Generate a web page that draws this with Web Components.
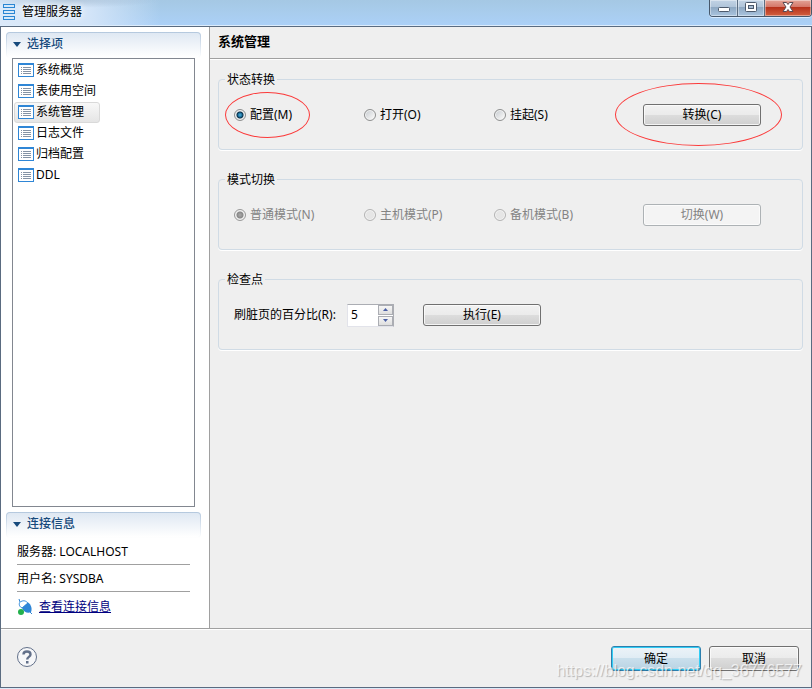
<!DOCTYPE html>
<html lang="zh-CN">
<head>
<meta charset="utf-8">
<title>管理服务器</title>
<style>
	html, body {
		margin: 0;
		height: 100%;
	}
	body {
		font: 12px/18px "Noto Sans", "Noto Sans CJK SC", sans-serif;
		color: #000;
	}
</style>
</head>
<body>
<app-window caption="管理服务器">
	<side-bar slot="side">
		<side-section caption="选择项" grow>
			<nav-list>
				<nav-item>系统概览</nav-item>
				<nav-item>表使用空间</nav-item>
				<nav-item selected>系统管理</nav-item>
				<nav-item>日志文件</nav-item>
				<nav-item>归档配置</nav-item>
				<nav-item>DDL</nav-item>
			</nav-list>
		</side-section>
		<side-section caption="连接信息">
			<conn-info server="LOCALHOST" user="SYSDBA"></conn-info>
		</side-section>
	</side-bar>
	<main-panel caption="系统管理">
		<group-box caption="状态转换">
			<radio-set name="state" options="配置(M),打开(O),挂起(S)" marked></radio-set>
			<push-button marked>转换(C)</push-button>
		</group-box>
		<group-box caption="模式切换">
			<radio-set name="mode" options="普通模式(N),主机模式(P),备机模式(B)" disabled></radio-set>
			<push-button disabled>切换(W)</push-button>
		</group-box>
		<group-box caption="检查点">
			<spin-box caption="刷脏页的百分比(R):" value="5"></spin-box>
			<push-button>执行(E)</push-button>
		</group-box>
	</main-panel>
	<bottom-bar slot="bottom">
		<push-button size="large" primary>确定</push-button>
		<push-button size="large">取消</push-button>
	</bottom-bar>
</app-window>

<script>
// window frame
window.customElements.define('app-window', class extends HTMLElement {
	constructor() {
		super();
		let shadowRoot = this.attachShadow({mode: 'open'});
		shadowRoot.innerHTML = `
<style>
	:host {
		display: flex;
		flex-direction: column;
		box-sizing: border-box;
		min-height: 100vh;
		padding-bottom: 1px;
		background: #dce9f8;
	}
	header {
		display: flex;
		justify-content: space-between;
		align-items: flex-start;
		height: 26px;
		box-sizing: border-box;
		border-bottom: 1px solid #dcecfc;
		background:
			radial-gradient(ellipse 90px 8px at 70px 0, #8fa9c080 0%, transparent 100%),
			linear-gradient(90deg, #dbe9f9 0, #d2e4f8 90px, transparent 160px),
			linear-gradient(180deg, #a5c8e4 0, #a8ccec 45%, #abd0f7 100%);
	}
	.title {
		display: flex;
		align-items: center;
		gap: 7px;
		height: 24px;
		padding-left: 3px;
	}
	.title span {
		text-shadow: 0 0 6px #fff, 0 0 10px #fff;
	}
	h1 {
		margin: 0;
		font: inherit;
	}
	svg {
		display: block;
	}
	.frame {
		flex: 1;
		display: flex;
		flex-direction: column;
		border: 1px solid #5a6b80;
		background: #efefef;
	}
	.body {
		flex: 1;
		display: flex;
	}
</style>
<header>
	<div class="title">
		<svg width="12" height="16" fill="#d5e8fa" stroke="#2a86d3">
			<rect x=".5" y=".5" width="11" height="3"/>
			<rect x=".5" y="6.5" width="11" height="3"/>
			<rect x=".5" y="12.5" width="11" height="3"/>
		</svg>
		<h1><span>${this.getAttribute('caption')}</span></h1>
	</div>
	<window-controls></window-controls>
</header>
<div class="frame">
	<div class="body">
		<slot name="side"></slot>
		<slot></slot>
	</div>
	<slot name="bottom"></slot>
</div>
    `;
	}
});
// minimize, maximize, close
window.customElements.define('window-controls', class extends HTMLElement {
	constructor() {
		super();
		let shadowRoot = this.attachShadow({mode: 'open'});
		shadowRoot.innerHTML = `
<style>
	:host {
		display: flex;
		height: 17px;
		box-sizing: border-box;
		border: 1px solid #47586b;
		border-top: 0;
		border-radius: 0 0 4px 4px;
		overflow: hidden;
		box-shadow: 0 1px 0 #d8ebff;
	}
	button {
		display: flex;
		justify-content: center;
		width: 28px;
		margin: 0;
		padding: 0;
		border: 0;
		border-right: 1px solid #5b6d82;
		background: linear-gradient(#c2d3e5 0, #b1c5da 42%, #8da7c1 43%, #a9c4df 100%);
		box-shadow: inset 0 0 0 1px #ffffff66;
	}
	button + button {
		width: 27px;
	}
	button:last-child {
		width: 46px;
		border-right: 0;
		background: linear-gradient(#e3a497 0, #d5786a 42%, #b52f19 43%, #d2603f 100%);
	}
</style>
<button aria-label="最小化">
	<svg width="14" height="16"><rect x="1.5" y="7.5" width="11" height="4" rx="1" fill="#fff" stroke="#4d5a6c"/></svg>
</button>
<button aria-label="最大化">
	<svg width="14" height="16">
		<rect x="1.5" y="2.5" width="11" height="9" rx="1" fill="#fff" stroke="#4d5a6c"/>
		<rect x="4.5" y="5.5" width="5" height="3" fill="#a9bdd3" stroke="#4d5a6c"/>
	</svg>
</button>
<button aria-label="关闭">
	<svg width="14" height="16">
		<path d="M2 2.500h3.500L7 4.500l1.500-2H12L9 7l3 4.500H8.500L7 9.500l-1.500 2H2L5 7z" fill="#fff" stroke="#5c4a52"/>
	</svg>
</button>
    `;
	}
});
// left column
window.customElements.define('side-bar', class extends HTMLElement {
	constructor() {
		super();
		let shadowRoot = this.attachShadow({mode: 'open'});
		shadowRoot.innerHTML = `
<style>
	:host {
		display: flex;
		flex-direction: column;
		gap: 5px;
		flex: 0 0 209px;
		box-sizing: border-box;
		padding: 5px 8px 0 5px;
		border-right: 1px solid #a0a0a0;
		background: #fff;
	}
</style>
<slot></slot>
    `;
	}
});
// collapsible section of the left column
window.customElements.define('side-section', class extends HTMLElement {
	constructor() {
		super();
		let shadowRoot = this.attachShadow({mode: 'open'});
		shadowRoot.innerHTML = `
<style>
	:host {
		display: flex;
		flex-direction: column;
	}
	:host([grow]) {
		flex: 1;
	}
	h2 {
		margin: 0;
		font: inherit;
	}
	button {
		display: flex;
		align-items: center;
		gap: 6px;
		width: 100%;
		height: 26px;
		margin: 0;
		padding: 0 6px 2px;
		border: 1px solid transparent;
		border-radius: 4px;
		background:
			linear-gradient(#dfe8f3, #fff) padding-box,
			linear-gradient(#b4c8de, #fff) border-box;
		font: inherit;
		font-weight: 500;
		color: #174a7c;
	}
</style>
<h2>
	<button aria-expanded="true">
		<svg width="8" height="5"><path d="M0 0h8L4 5z" fill="#174a7c"/></svg>
		${this.getAttribute('caption')}
	</button>
</h2>
<slot></slot>
    `;
	}
});
// list of pages
window.customElements.define('nav-list', class extends HTMLElement {
	constructor() {
		super();
		let shadowRoot = this.attachShadow({mode: 'open'});
		shadowRoot.innerHTML = `
<style>
	:host {
		flex: 1;
		display: flex;
		flex-direction: column;
		align-items: flex-start;
		margin: 0 6px;
		padding: 1px;
		border: 1px solid #828790;
		background: #fff;
	}
</style>
<slot></slot>
    `;
		this.setAttribute('role', 'listbox');
	}
});
window.customElements.define('nav-item', class extends HTMLElement {
	constructor() {
		super();
		let shadowRoot = this.attachShadow({mode: 'open'});
		shadowRoot.innerHTML = `
<style>
	:host {
		display: flex;
		align-items: center;
		gap: 2px;
		box-sizing: border-box;
		height: 21px;
		padding: 0 15px 1px 3px;
		border: 1px solid transparent;
		border-radius: 3px;
	}
	:host([selected]) {
		border-color: #d9d9d9;
		background: linear-gradient(#f8f8f8, #e5e5e5);
	}
</style>
<svg width="16" height="14" fill="none">
	<rect x=".5" y=".5" width="15" height="13" fill="#fff" stroke="#2f86d6"/>
	<path d="M0 1h16" stroke="#2f86d6" stroke-width="2"/>
	<path d="M3 4.500h1M3 6.500h1M3 8.500h1M3 10.500h1M5 4.500h8M5 6.500h8M5 8.500h8M5 10.500h8" stroke="#8593a5"/>
</svg>
<slot></slot>
    `;
		this.setAttribute('role', 'option');
	}
});
// connection details
window.customElements.define('conn-info', class extends HTMLElement {
	constructor() {
		super();
		let shadowRoot = this.attachShadow({mode: 'open'});
		shadowRoot.innerHTML = `
<style>
	:host {
		display: block;
		padding: 0 11px 12px;
	}
	.row {
		box-sizing: border-box;
		height: 27px;
		padding-top: 5px;
		border-bottom: 1px solid #a0a0a0;
	}
	.link {
		display: flex;
		align-items: center;
		gap: 6px;
		padding-top: 6px;
	}
	a {
		color: #000080;
	}
</style>
<div class="row">服务器: ${this.getAttribute('server')}</div>
<div class="row">用户名: ${this.getAttribute('user')}</div>
<div class="link">
	<svg width="16" height="16" fill="none">
		<path d="M2 0l1 3M15 15l-2-2" stroke="#2f86d6"/>
		<path d="M5 9C1 7 2 3 4 2.500 7 1 9 2 11 4z" fill="#fff" stroke="#3a8edb"/>
		<path d="M5 9l6-5.500c3 2 4.500 6 3 9.500-3 2-7.500 0-9-4z" fill="#2f86d6"/>
		<circle cx="4" cy="13" r="3" fill="#22b04b"/>
	</svg>
	<a href="#">查看连接信息</a>
</div>
    `;
	}
});
// right side
window.customElements.define('main-panel', class extends HTMLElement {
	constructor() {
		super();
		let shadowRoot = this.attachShadow({mode: 'open'});
		shadowRoot.innerHTML = `
<style>
	:host {
		flex: 1;
		min-width: 0;
	}
	h2 {
		box-sizing: border-box;
		height: 32px;
		margin: 0;
		padding: 5px 8px;
		border-bottom: 1px solid #a0a0a0;
		box-shadow: 0 1px 0 #fff;
		font-size: 13px;
		line-height: 18px;
	}
	.groups {
		display: flex;
		flex-direction: column;
		gap: 20px;
		padding: 12px 8px;
	}
</style>
<h2>${this.getAttribute('caption')}</h2>
<div class="groups"><slot></slot></div>
    `;
	}
});
// titled frame
window.customElements.define('group-box', class extends HTMLElement {
	constructor() {
		super();
		let shadowRoot = this.attachShadow({mode: 'open'});
		shadowRoot.innerHTML = `
<style>
	:host {
		display: block;
		height: 80px;
	}
	fieldset {
		box-sizing: border-box;
		height: 79px;
		margin: 0;
		padding: 15px 14px 0 15px;
		border: 1px solid #d0dbe5;
		border-radius: 4px;
		box-shadow: 0 1px 0 #fff;
		min-width: 0;
	}
	legend {
		height: 17px;
		margin-left: -9px;
		padding: 0 2px;
	}
	.row {
		display: flex;
		align-items: center;
		height: 24px;
	}
</style>
<fieldset>
	<legend>${this.getAttribute('caption')}</legend>
	<div class="row"><slot></slot></div>
</fieldset>
    `;
	}
});
// row of radio buttons, the first one is checked
window.customElements.define('radio-set', class extends HTMLElement {
	constructor() {
		super();
		let shadowRoot = this.attachShadow({mode: 'open'});
		let disabled = this.hasAttribute('disabled') ? 'disabled' : '';
		let name = this.getAttribute('name');
		let items = this.getAttribute('options').split(',').map((text, i) => `
<label>
	<input type="radio" name="${name}" ${i === 0 ? 'checked' : ''} ${disabled}>
	${text}
</label>`).join('');
		shadowRoot.innerHTML = `
<style>
	:host {
		display: flex;
		margin-right: 19px;
	}
	label {
		display: flex;
		align-items: center;
		gap: 4px;
		position: relative;
		width: 130px;
	}
	input {
		appearance: none;
		box-sizing: border-box;
		width: 12px;
		height: 12px;
		margin: 0;
		border: 1px solid #8e8f8f;
		border-radius: 50%;
		background: linear-gradient(135deg, #c4c9ce, #f4f4f4 80%);
		box-shadow: inset 0 0 0 1px #f4f4f4;
	}
	input:checked {
		background: radial-gradient(circle, #4fb4dc 0, #1b6d9b 2px, #0b3047 3px, #d8dde1 4px);
	}
	:host([disabled]) {
		color: #838383;
	}
	:host([disabled]) input {
		border-color: #b4b4b4;
		background: #e6e6e6;
	}
	:host([disabled]) input:checked {
		border-color: #999;
		background: radial-gradient(circle, #aaa 0, #888 3px, #e6e6e6 4px);
	}
	:host([marked]) label:first-of-type::after {
		content: "";
		position: absolute;
		left: -9px;
		top: -14px;
		width: 83px;
		height: 44px;
		border: 1px solid #fb3a3a;
		border-radius: 50%;
		pointer-events: none;
	}
</style>
${items}
    `;
	}
});
// number field with arrows
window.customElements.define('spin-box', class extends HTMLElement {
	constructor() {
		super();
		let shadowRoot = this.attachShadow({mode: 'open'});
		shadowRoot.innerHTML = `
<style>
	:host {
		display: flex;
		align-items: center;
		margin-right: 29px;
	}
	label {
		width: 113px;
		white-space: nowrap;
	}
	.field {
		display: flex;
		box-sizing: border-box;
		width: 47px;
		height: 23px;
		border: 1px solid #e2e3ea;
		border-top-color: #abadb3;
		border-right-color: #abadb3;
		background: #fff;
	}
	input {
		flex: 1;
		min-width: 0;
		margin: 0;
		padding: 0 0 0 3px;
		border: 0;
		background: none;
		font: inherit;
		color: inherit;
		outline: 0;
	}
	.arrows {
		display: flex;
		flex-direction: column;
		gap: 1px;
		width: 15px;
	}
	button {
		flex: 1;
		display: flex;
		align-items: center;
		justify-content: center;
		margin: 0;
		padding: 0;
		border: 1px solid #abadb3;
		background: linear-gradient(#f6f6f6, #dedede);
	}
</style>
<label for="num">${this.getAttribute('caption')}</label>
<div class="field">
	<input id="num" type="text" inputmode="numeric" value="${this.getAttribute('value')}">
	<div class="arrows">
		<button aria-label="增加"><svg width="5" height="3"><path d="M0 3h5L2.500 0z" fill="#4a5fa5"/></svg></button>
		<button aria-label="减少"><svg width="5" height="3"><path d="M0 0h5L2.500 3z" fill="#4a5fa5"/></svg></button>
	</div>
</div>
    `;
	}
});
// button
window.customElements.define('push-button', class extends HTMLElement {
	constructor() {
		super();
		let shadowRoot = this.attachShadow({mode: 'open'});
		shadowRoot.innerHTML = `
<style>
	:host {
		display: block;
		position: relative;
	}
	button {
		display: block;
		box-sizing: border-box;
		width: 118px;
		height: 22px;
		margin: 0;
		padding: 0;
		border: 1px solid #707070;
		border-radius: 3px;
		background: linear-gradient(#f2f2f2 0, #ebebeb 48%, #dddddd 50%, #cfcfcf 100%);
		box-shadow: inset 0 0 0 1px #fcfcfccc;
		font: inherit;
		color: #000;
	}
	:host([size=large]) button {
		width: 90px;
		height: 25px;
	}
	:host([primary]) button {
		border-color: #2c7fae;
		background: linear-gradient(#ecf3f8 0, #e0ecf4 48%, #c9dfec 50%, #b9d3e3 100%);
		box-shadow: inset 0 0 0 1px #31cdf5;
	}
	button:disabled {
		border-color: #adb2b5;
		background: #f4f4f4;
		color: #838383;
	}
	:host([marked])::after {
		content: "";
		position: absolute;
		left: -28px;
		top: -21px;
		width: 165px;
		height: 61px;
		border: 1px solid #fb3a3a;
		border-radius: 50%;
		pointer-events: none;
	}
</style>
<button ${this.hasAttribute('disabled') ? 'disabled' : ''}><slot></slot></button>
    `;
	}
});
// help and dialog buttons
window.customElements.define('bottom-bar', class extends HTMLElement {
	constructor() {
		super();
		let shadowRoot = this.attachShadow({mode: 'open'});
		shadowRoot.innerHTML = `
<style>
	:host {
		display: flex;
		align-items: flex-start;
		gap: 8px;
		position: relative;
		box-sizing: border-box;
		height: 59px;
		padding: 17px 12px 0 15px;
		border-top: 1px solid #a0a0a0;
		box-shadow: inset 0 1px 0 #fff;
	}
	.help {
		margin: 0 auto 0 0;
		padding: 0;
		border: 0;
		background: none;
	}
	svg {
		display: block;
	}
	.mark {
		position: absolute;
		right: 9px;
		bottom: 7px;
		font: 16px/18px "Liberation Sans", sans-serif;
		color: #ffffffb3;
		text-shadow: 1px 1px 1px #00000040;
		pointer-events: none;
	}
</style>
<button class="help" aria-label="帮助">
	<svg width="22" height="22" fill="none">
		<circle cx="11" cy="11" r="9.500" fill="#f6f7f9" stroke="#62708a"/>
		<path d="M7.500 8.500c0-4 7-4 7 0 0 2.500-3.300 2.300-3.300 5" stroke="#62708a" stroke-width="2.400"/>
		<rect x="10" y="15" width="2.500" height="2.500" fill="#62708a"/>
	</svg>
</button>
<slot></slot>
<span class="mark">https://blog.csdn.net/qq_36776577</span>
    `;
	}
});
</script>
</body>
</html>
